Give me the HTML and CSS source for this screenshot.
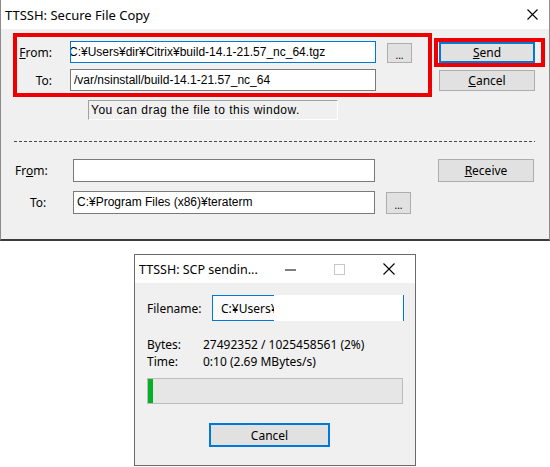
FILE: index.html
```html
<!DOCTYPE html>
<html>
<head>
<meta charset="utf-8">
<link rel="stylesheet" href="styles.css">
</head>
<body>
<div class="win1">
  <div class="titlebar">
    <span class="title">TTSSH: Secure File Copy</span>
    <svg class="close" width="11" height="11" viewBox="0 0 11 11"><path d="M0.5 0.5L10.5 10.5M10.5 0.5L0.5 10.5" stroke="#000" stroke-width="1.1" fill="none"/></svg>
  </div>
  <div class="w1body">
    <div class="sec1">
      <div class="redbox main">
        <div class="grid1">
          <span class="lbl lbl-from"><u>F</u>rom:</span>
          <div class="field focus"><span class="scroll">C:¥Users¥dir¥Citrix¥build-14.1-21.57_nc_64.tgz</span></div>
          <button class="btn dots">...</button>
          <span class="lbl lbl-to">To:</span>
          <div class="field">/var/nsinstall/build-14.1-21.57_nc_64</div>
        </div>
      </div>
      <div class="btncol">
        <div class="redbox sendbox"><button class="btn default"><u>S</u>end</button></div>
        <button class="btn cancel1"><u>C</u>ancel</button>
      </div>
    </div>
    <div class="hint">You can drag the file to this window.</div>
    <div class="dash"></div>
    <div class="grid2">
      <span class="lbl">Fr<u>o</u>m:</span>
      <div class="field"></div>
      <span></span>
      <button class="btn wide"><u>R</u>eceive</button>
      <span class="lbl">To:</span>
      <div class="field">C:¥Program Files (x86)¥teraterm</div>
      <button class="btn dots">...</button>
    </div>
  </div>
</div>

<div class="win2">
  <div class="titlebar2">
    <span class="title2">TTSSH: SCP sendin...</span>
    <div class="ctrls">
      <svg width="11" height="11" viewBox="0 0 11 11"><path d="M0 6H11" stroke="#000" stroke-width="1"/></svg>
      <svg width="11" height="11" viewBox="0 0 11 11"><rect x="0.5" y="0.5" width="10" height="10" stroke="#c8c8c8" fill="none"/></svg>
      <svg width="12" height="12" viewBox="0 0 12 12"><path d="M0.5 0.5L11.5 11.5M11.5 0.5L0.5 11.5" stroke="#000" stroke-width="1.1" fill="none"/></svg>
    </div>
  </div>
  <div class="w2body">
    <div class="frow">
      <span class="lbl2">Filename:</span>
      <div class="field2">C:¥Users¥<div class="redact"></div></div>
    </div>
    <div class="stats">
      <span>Bytes:</span><span>27492352 / 1025458561 (2%)</span>
      <span>Time:</span><span>0:10 (2.69 MBytes/s)</span>
    </div>
    <div class="progress"><div class="fill" style="width:2%"></div></div>
    <button class="btn2">Cancel</button>
  </div>
</div>
</body>
</html>
```
FILE: styles.css
```css
* { box-sizing: border-box; }
html, body { margin: 0; padding: 0; background: #fff; }
body { width: 550px; height: 467px; overflow: hidden; font-family: "Noto Sans", sans-serif; font-size: 12px; color: #000; }

.win1 { width: 550px; height: 241px; border-left: 1px solid #8c8c8c; border-right: 1px solid #8c8c8c; border-bottom: 2px solid #3c3c3c; display: flex; flex-direction: column; }
.titlebar { height: 29px; background: #fff; display: flex; align-items: center; justify-content: space-between; padding: 0 11px 0 4px; }
.title { font-size: 13px; }
.w1body { flex: 1; background: #f0f0f0; padding-top: 4px; }

.sec1 { display: flex; padding-left: 12px; }
.redbox { border: 4px solid #ee0000; }
.main { width: 419px; height: 64px; padding: 4px 0 0 0; }
.grid1 { display: grid; grid-template-columns: 42px 306px 25px; column-gap: 11px; row-gap: 6px; grid-template-rows: 22px 22px; align-items: center; }
.lbl { text-align: right; white-space: nowrap; }
.lbl-from, .lbl-to { padding-right: 7px; }
.field { height: 100%; background: #fff; border: 1px solid #7a7a7a; font-family: "Liberation Sans", sans-serif; font-size: 12px; padding: 3px 0 0 3px; white-space: nowrap; overflow: hidden; }
.field.focus { border-color: #0078d7; }
.scroll { display: inline-block; margin-left: -5px; }

.btn { font-family: "Noto Sans", sans-serif; font-size: 12px; background: #e1e1e1; border: 1px solid #adadad; padding: 0; margin: 0; color: #000; }
.dots { width: 25px; height: 20px; align-self: end; font-size: 10px; line-height: 1; padding-top: 4px; }

.btncol { margin-left: 2px; margin-top: 5px; display: flex; flex-direction: column; }
.sendbox { width: 111px; height: 29px; padding-left: 1px; }
.default { width: 96px; height: 21px; border: 1px solid #0078d7; box-shadow: inset 0 0 0 1px #0078d7; }
.cancel1 { width: 96px; height: 21px; margin: 3px 0 0 5px; }

.hint { margin: 3px 0 0 87px; width: 250px; height: 20px; border-top: 1px solid #a0a0a0; border-left: 1px solid #a0a0a0; border-right: 1px solid #fff; border-bottom: 1px solid #fff; font-family: "Liberation Sans", sans-serif; letter-spacing: 0.5px; padding: 2px 0 0 2px; }
.dash { margin: 21px 0 0 13px; width: 521px; height: 1px; background: repeating-linear-gradient(90deg, #4a4a4a 0 3px, transparent 3px 5px); }

.grid2 { margin-top: 17px; display: grid; grid-template-columns: 47px 302px 25px 96px; column-gap: 11px; grid-template-rows: 23px 23px; row-gap: 9px; align-items: center; padding-left: 14px; }
.grid2 .lbl { text-align: left; }
.grid2 > .lbl:nth-child(5) { padding-left: 15px; }
.wide { width: 96px; height: 23px; margin-left: 16px; }
.grid2 .dots { height: 22px; }

.win2 { margin: 13px 0 0 134px; width: 282px; height: 212px; border: 1px solid #6a6a6a; display: flex; flex-direction: column; }
.titlebar2 { height: 28px; background: #fff; display: flex; align-items: center; justify-content: space-between; padding: 0 20px 0 4px; }
.title2 { font-size: 12.5px; }
.ctrls { display: flex; align-items: center; gap: 38px; }
.w2body { flex: 1; background: #f0f0f0; padding: 12px 0 0 12px; }
.frow { display: flex; align-items: center; }
.lbl2 { width: 65px; }
.field2 { position: relative; width: 192px; height: 26px; border: 1px solid #0078d7; background: #fafafa; padding: 4px 0 0 8px; }
.redact { position: absolute; left: 61px; top: -1px; width: 129px; height: 26px; background: #fff; }
.stats { margin-top: 15px; display: grid; grid-template-columns: 56px auto; line-height: 17px; }
.progress { margin-top: 8px; width: 256px; height: 26px; border: 1px solid #bcbcbc; background: #e6e6e6; }
.fill { height: 100%; background: #06b025; min-width: 5px; }
.btn2 { display: block; margin: 19px 0 0 62px; width: 121px; height: 24px; font-family: "Noto Sans", sans-serif; font-size: 12px; background: #e1e1e1; border: 1px solid #0078d7; box-shadow: inset 0 0 0 1px #0078d7; padding: 0; }
```
